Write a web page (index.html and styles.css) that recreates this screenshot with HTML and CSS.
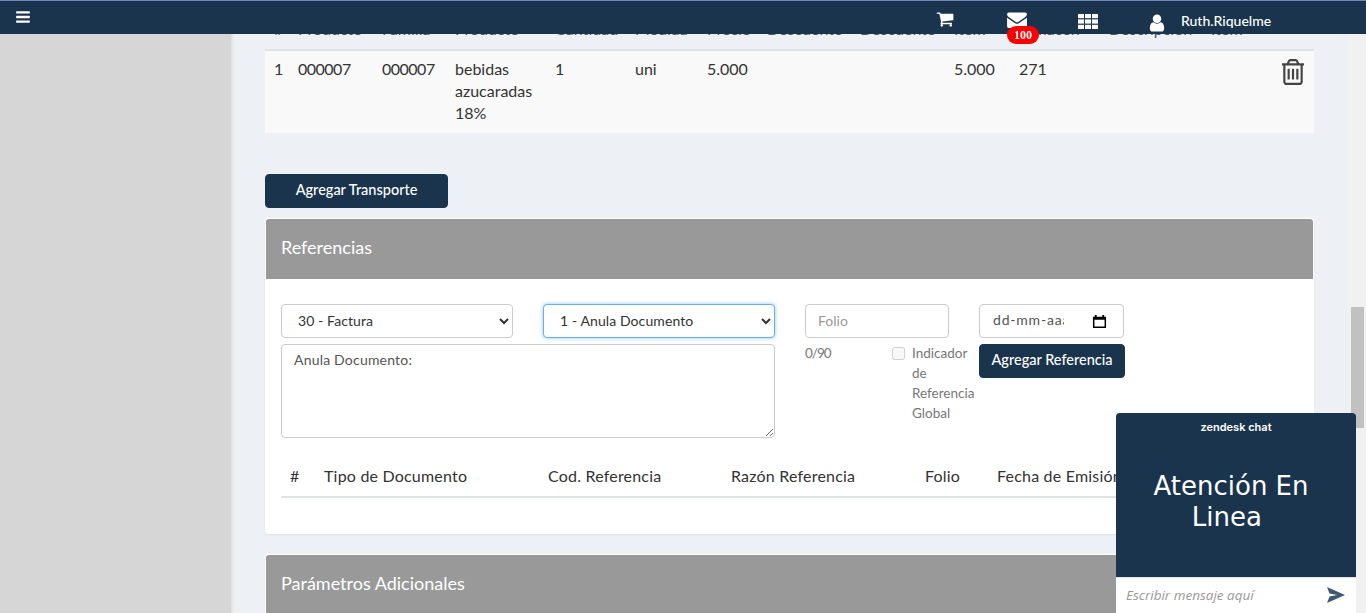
FILE: index.html
```html
<!DOCTYPE html>
<html lang="es">
  <head>
    <title>Documento</title>
    <meta charset="utf-8">
    <link rel="stylesheet" href="styles.css">
  </head>
  <body>
    <header class="navbar">
      <svg class="nav-bars" viewBox="0 0 1792 1792"><path d="M1664 1344v128q0 26-19 45t-45 19h-1408q-26 0-45-19t-19-45v-128q0-26 19-45t45-19h1408q26 0 45 19t19 45zm0-512v128q0 26-19 45t-45 19h-1408q-26 0-45-19t-19-45v-128q0-26 19-45t45-19h1408q26 0 45 19t19 45zm0-512v128q0 26-19 45t-45 19h-1408q-26 0-45-19t-19-45v-128q0-26 19-45t45-19h1408q26 0 45 19t19 45z"/></svg>
      <div class="nav-items">
        <div class="nav-item">
          <svg class="ico-cart" viewBox="0 0 1792 1792"><path d="M704 1536q0 52-38 90t-90 38-90-38-38-90 38-90 90-38 90 38 38 90zm896 0q0 52-38 90t-90 38-90-38-38-90 38-90 90-38 90 38 38 90zm128-1088v512q0 24-16.5 42.5t-40.5 21.5l-1044 122q13 60 13 70 0 16-24 64h920q26 0 45 19t19 45-19 45-45 19h-1024q-26 0-45-19t-19-45q0-11 8-31.5t16-36 21.5-40 15.5-29.5l-177-823h-204q-26 0-45-19t-19-45 19-45 45-19h256q16 0 28.5 6.5t19.5 15.5 13 24.5 8 26 5.5 29.5 4.5 26h1201q26 0 45 19t19 45z"/></svg>
        </div>
        <div class="nav-item">
          <svg class="ico-mail" viewBox="0 128 1792 1536"><path d="M1792 710v794q0 66-47 113t-113 47h-1472q-66 0-113-47t-47-113v-794q44 49 101 87 362 246 497 345 57 42 92.5 65.5t94.5 48 110 24.5h2q51 0 110-24.5t94.5-48 92.5-65.5q170-123 498-345 57-39 100-87zm0-294q0 79-49 151t-122 123q-376 261-468 325-10 7-42.5 30.5t-54 38-52 32.5-57.5 27-50 9h-2q-23 0-50-9t-57.5-27-52-32.5-54-38-42.5-30.5q-91-64-262-182.5t-205-142.5q-62-42-117-115.5t-55-136.5q0-78 41.5-130t118.5-52h1472q65 0 112.5 47t47.5 113z"/></svg>
          <span class="badge">100</span>
        </div>
        <div class="nav-item">
          <svg class="ico-grid" viewBox="0 0 20 15">
            <rect x="0" y="0" width="6" height="4.2"/><rect x="7" y="0" width="6" height="4.2"/><rect x="14" y="0" width="6" height="4.2"/>
            <rect x="0" y="5.4" width="6" height="4.2"/><rect x="7" y="5.4" width="6" height="4.2"/><rect x="14" y="5.4" width="6" height="4.2"/>
            <rect x="0" y="10.8" width="6" height="4.2"/><rect x="7" y="10.8" width="6" height="4.2"/><rect x="14" y="10.8" width="6" height="4.2"/>
          </svg>
        </div>
        <div class="nav-user">
          <svg class="ico-user" viewBox="0 0 1792 1792"><path d="M1536 1399q0 109-62.5 187t-150.5 78h-854q-88 0-150.5-78t-62.5-187q0-85 8.5-160.5t31.5-152 58.5-131 94-89 134.5-34.5q131 128 313 128t313-128q76 0 134.5 34.5t94 89 58.5 131 31.5 152 8.5 160.5zm-256-887q0 159-112.5 271.5t-271.5 112.5-271.5-112.5-112.5-271.5 112.5-271.5 271.5-112.5 271.5 112.5 112.5 271.5z"/></svg>
          <span>Ruth.Riquelme</span>
        </div>
      </div>
    </header>

    <div class="layout">
      <aside class="sidebar"></aside>
      <main class="content">
        <table class="tabla tabla-detalle">
          <thead>
            <tr>
              <th class="c1">#</th><th class="c2">Producto</th><th class="c3">Familia</th><th class="c4">Producto</th><th class="c5">Cantidad</th><th class="c6">Medida</th><th class="c7">Precio</th><th class="c8">Descuento</th><th class="c9">Descuento</th><th class="c10">Item</th><th class="c11">Almacén</th><th class="c12">Descripción</th><th class="c13">Item</th>
            </tr>
          </thead>
          <tbody>
            <tr>
              <td>1</td><td class="codigo">000007</td><td class="codigo">000007</td><td>bebidas azucaradas 18%</td><td>1</td><td>uni</td><td>5.000</td><td></td><td></td><td>5.000</td><td>271</td><td></td>
              <td class="celda-trash"><svg class="ico-trash" viewBox="256 128 1280 1536"><path d="M704 736v576q0 14-9 23t-23 9h-64q-14 0-23-9t-9-23v-576q0-14 9-23t23-9h64q14 0 23 9t9 23zm256 0v576q0 14-9 23t-23 9h-64q-14 0-23-9t-9-23v-576q0-14 9-23t23-9h64q14 0 23 9t9 23zm256 0v576q0 14-9 23t-23 9h-64q-14 0-23-9t-9-23v-576q0-14 9-23t23-9h64q14 0 23 9t9 23zm128 724v-948h-896v948q0 22 7 40.5t14.5 27 10.5 8.5h832q3 0 10.5-8.5t14.5-27 7-40.5zm-672-1076h448l-48-117q-7-9-17-11h-317q-10 2-17 11zm928 32v64q0 14-9 23t-23 9h-96v948q0 83-47 143.5t-113 60.5h-832q-66 0-113-58.5t-47-141.5v-952h-96q-14 0-23-9t-9-23v-64q0-14 9-23t23-9h309l70-167q15-37 54-63t79-26h320q40 0 79 26t54 63l70 167h309q14 0 23 9t9 23z"/></svg></td>
            </tr>
          </tbody>
        </table>

        <button class="btn btn-transporte">Agregar Transporte</button>

        <section class="card">
          <h2 class="card-head">Referencias</h2>
          <div class="card-body">
            <div class="form-ref">
              <div class="col-doc">
                <div class="selects">
                  <select class="campo"><option>30 - Factura</option></select>
                  <select class="campo campo-foco"><option>1 - Anula Documento</option></select>
                </div>
                <textarea class="campo area">Anula Documento:</textarea>
              </div>
              <div class="col-folio">
                <input class="campo" type="text" placeholder="Folio">
                <div class="folio-pie">
                  <span class="contador">0/90</span>
                  <input class="check" type="checkbox" disabled>
                  <span class="check-label">Indicador de Referencia Global</span>
                </div>
              </div>
              <div class="col-fecha">
                <div class="fecha">
                  <input class="campo fecha-texto" type="text" value="dd-mm-aaaa">
                  <svg class="ico-cal" viewBox="0 0 16 16"><path d="M3 1h2v2h6V1h2v2h2v12H1V3h2zM2.600 6v7.400h10.800V6z"/></svg>
                </div>
                <button class="btn btn-ref">Agregar Referencia</button>
              </div>
            </div>

            <table class="tabla tabla-ref">
              <thead>
                <tr><th class="r1">#</th><th class="r2">Tipo de Documento</th><th class="r3">Cod. Referencia</th><th class="r4">Razón Referencia</th><th class="r5">Folio</th><th>Fecha de Emisión</th></tr>
              </thead>
            </table>
          </div>
        </section>

        <section class="card card-adic">
          <h2 class="card-head">Parámetros Adicionales</h2>
        </section>
      </main>
      <div class="scroll"><div class="scroll-thumb"></div></div>
    </div>

    <div class="chat">
      <div class="chat-marca">zendesk chat</div>
      <div class="chat-titulo">Atención En Linea&nbsp;</div>
      <div class="chat-pie">
        <span class="chat-input">Escribir mensaje aquí</span>
        <svg class="ico-send" viewBox="0 0 18 16"><path d="M0 0l18 8-18 8 2.500-6.500L10 8 2.500 6.500z"/></svg>
      </div>
    </div>
  </body>
</html>
```

FILE: styles.css
```css
* { box-sizing: border-box; }
html, body { height: 613px; overflow: hidden; }
body {
	margin: 0;
	font-family: "Lato", "Liberation Sans", sans-serif;
	font-size: 16px;
	color: #333;
	background: #edf0f5;
}

/* barra superior */
.navbar {
	position: fixed;
	top: 0; left: 0; right: 0;
	height: 34px;
	z-index: 10;
	display: flex;
	align-items: flex-start;
	background: #1a344d;
	border-top: 1px solid #6f8ab8;
	color: #fff;
}
.navbar svg { fill: #fff; display: block; }
.nav-bars { width: 16px; height: 16px; margin: 8px 0 0 15px; }
.nav-items { display: flex; margin-left: 905px; }
.nav-item { position: relative; width: 71px; height: 33px; }
.ico-cart { width: 18px; height: 18px; margin-top: 9px; }
.ico-mail { width: 20px; height: 17px; margin-top: 10px; }
.ico-grid { width: 20px; height: 15px; margin-top: 13px; }
.badge {
	position: absolute;
	top: 25px; left: 0;
	width: 32px; height: 18px;
	border-radius: 9px;
	background: #f00;
	color: #fff;
	font: bold 12px/18px "Liberation Serif", serif;
	text-align: center;
}
.nav-user { display: flex; align-items: flex-start; margin-left: 1px; }
.ico-user { width: 20px; height: 20px; margin: 12px 0 0 -3px; }
.nav-user span { margin: 11px 0 0 14px; font-size: 14px; font-weight: 500; line-height: 18px; }

/* estructura */
.layout { display: flex; height: 613px; }
.sidebar { width: 231px; flex: none; background: #d6d6d6; box-shadow: 1px 0 3px rgba(0,0,0,0.1); }
.content { flex: 1; min-width: 0; padding: 15px 35px 0 34px; overflow: hidden; }
.scroll { width: 17px; flex: none; padding: 307px 2px 0; background: #f1f1f1; }
.scroll-thumb { height: 121px; background: #c1c1c1; }

/* tablas */
.tabla { width: 100%; border-collapse: collapse; table-layout: fixed; }
.tabla th { text-align: left; font-weight: 400; padding: 0 0 0 9px; }
.tabla-detalle th { height: 35px; padding-bottom: 7px; font-size: 16px; white-space: nowrap; overflow: hidden; border-bottom: 2px solid #dee2e6; color: #555; }
.tabla-detalle td { padding: 7px 0 9px 9px; vertical-align: top; line-height: 22px; background: #f9f9f9; }
.tabla-detalle .codigo { letter-spacing: -0.5px; }
.c1 { width: 24px; } .c2 { width: 84px; } .c3 { width: 73px; } .c4 { width: 100px; }
.c5 { width: 80px; } .c6 { width: 72px; } .c7 { width: 60px; } .c8 { width: 93px; }
.c9 { width: 94px; } .c10 { width: 65px; } .c11 { width: 90px; } .c12 { width: 102px; }
.ico-trash { width: 22px; height: 26px; fill: #444; display: block; margin: 1px 0 0 71px; }

.btn {
	display: block;
	border: 1px solid #1a344d;
	border-radius: 4px;
	background: #1a344d;
	color: #fff;
	font: 500 14.5px "Lato", sans-serif;
	height: 34px;
	padding: 0 0 3px;
}
.btn-transporte { width: 183px; margin: 41px 0 10px; }

/* tarjetas */
.card { background: #fff; border-radius: 4px; box-shadow: 0 1px 2px rgba(0,0,0,0.06); }
.card-head {
	margin: 0;
	height: 61px;
	padding: 0 15px;
	border: 1px solid #fff;
	border-bottom: 0;
	border-radius: 4px 4px 0 0;
	background: #999;
	color: #fff;
	font-size: 18px;
	font-weight: 400;
	line-height: 56px;
}
.card-body { height: 255px; padding: 25px 16px 0; }
.card-adic { margin-top: 20px; }

/* formulario */
.form-ref { display: flex; gap: 30px; height: 134px; }
.col-doc { width: 494px; display: flex; flex-direction: column; gap: 6px; }
.selects { display: flex; gap: 30px; }
.campo {
	display: block;
	height: 34px;
	width: 100%;
	border: 1px solid #ccc;
	border-radius: 4px;
	background: #fff;
	color: #444;
	font: 14px "Lato", sans-serif;
	padding: 0 12px 2px;
}
select.campo { width: 232px; letter-spacing: 0.1px; color: #333; }
.campo-foco { border-color: #66afe9; box-shadow: 0 0 4px rgba(102,175,233,0.7); outline: 0; }
.area { height: 94px; padding: 6px 12px; resize: both; color: #555; letter-spacing: 0.2px; }
.col-folio { width: 144px; }
.campo::placeholder { color: #999; }
.folio-pie { display: flex; align-items: flex-start; margin-top: 5px; font-size: 13.5px; line-height: 20px; color: #777; }
.contador { width: 87px; flex: none; letter-spacing: -1px; }
.check { width: 13px; height: 13px; margin: 4px 7px 0 0; flex: none; }
.check-label { width: 62px; flex: none; }
.col-fecha { width: 146px; display: flex; flex-direction: column; gap: 6px; }
.fecha { position: relative; width: 145px; }
.fecha-texto { padding: 0 59px 3px 13px; color: #555; letter-spacing: 0.8px; }
.ico-cal { position: absolute; top: 10px; right: 17px; width: 15px; height: 15px; fill: #000; }
.btn-ref { width: 146px; }

.tabla-ref { margin-top: 21px; }
.tabla-ref th { height: 38px; padding-bottom: 4px; border-bottom: 2px solid #dee2e6; color: #333; letter-spacing: 0.2px; white-space: nowrap; }
.r1 { width: 34px; } .r2 { width: 224px; } .r3 { width: 183px; } .r4 { width: 194px; } .r5 { width: 72px; }

/* chat */
.chat {
	position: fixed;
	left: 1116px; top: 413px;
	width: 240px; height: 200px;
	z-index: 20;
	display: flex;
	flex-direction: column;
	background: #1a344d;
	border-radius: 4px 4px 0 0;
	color: #fff;
}
.chat-marca { height: 28px; text-align: center; font: 600 11px/28px "Inter", sans-serif; }
.chat-titulo {
	height: 136px;
	padding: 30px 40px 0 30px;
	text-align: center;
	font: 26px/31px "DejaVu Sans", sans-serif;
}
.chat-pie {
	flex: 1;
	display: flex;
	align-items: center;
	justify-content: space-between;
	background: #fff;
	border-top: 1px solid #e4e6e8;
	padding: 0 11px 2px 10px;
}
.chat-input { font: italic 13.5px "Open Sans", sans-serif; color: #999; }
.ico-send { width: 18px; height: 16px; fill: #3e5a73; }
```
